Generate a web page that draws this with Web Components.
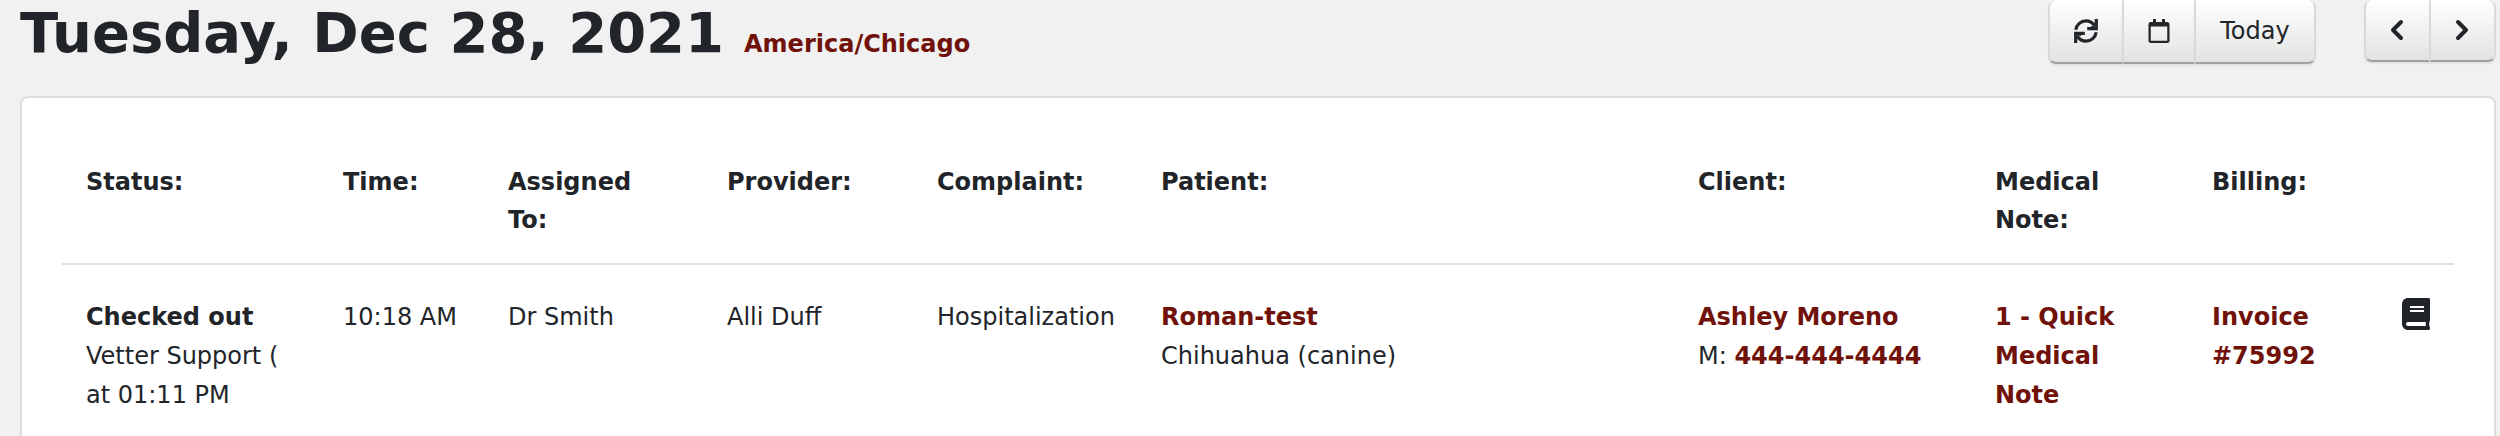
<!DOCTYPE html>
<html lang="en">
<head>
<meta charset="utf-8">
<title>Appointments</title>
<style>
html { background: #f1f1f1; }
body { margin: 0; font: 24px/39px Verdana, "DejaVu Sans", sans-serif; color: #212529; }
</style>
</head>
<body>
<day-page></day-page>
<script>
const define = (name, html) => customElements.define(name, class extends HTMLElement {
  constructor() {
    super();
    const t = document.createElement('template');
    t.innerHTML = html;
    this.attachShadow({ mode: 'open' }).append(t.content.cloneNode(true));
  }
});

define('button-group', `
<style>
:host { display: flex; }
::slotted(button) {
  display: flex; align-items: center; justify-content: center;
  box-sizing: border-box; height: var(--height, 64px); padding: 0 24px; margin: 0;
  font: inherit; color: inherit; cursor: pointer;
  border: 2px solid #d9d9d9; border-top-width: 0; border-right-width: 0; border-bottom-color: #a0a0a0;
  background: linear-gradient(#fff, #e2e2e2);
  box-shadow: 0 2px 2px #0001;
}
::slotted(button:first-of-type) { border-radius: 8px 0 0 8px; }
::slotted(button:last-of-type) { border-right-width: 2px; border-radius: 0 8px 8px 0; }
</style>
<slot></slot>`);

define('day-header', `
<style>
:host { display: flex; align-items: flex-start; gap: 48px; }
.title { flex: 1; display: flex; align-items: baseline; gap: 20px; }
h1 { margin: 0; font-size: 56px; line-height: 66px; }
a { color: #70120a; font-weight: bold; text-decoration: none; }
svg { display: block; }
.nav { --height: 62px; }
.pad { padding: 0 23px; }
.today { min-width: 122px; }
</style>
<div class="title"><h1>Tuesday, Dec 28, 2021</h1><a href="#timezone">America/Chicago</a></div>
<button-group>
  <button type="button" aria-label="Refresh"><svg width="24" height="24" viewBox="0 0 24 24" fill="none" stroke="currentColor" stroke-width="3.200"><g id="half"><path d="M1.800 10.800C2.600 5.500 6.800 1.900 12 1.900c3.600 0 6.500 1.700 8.600 4.800"/><path d="M22.300 0v9.700H13.200M22 9 17 8.500"/></g><g transform="rotate(180 12 12)"><path d="M1.800 10.800C2.600 5.500 6.800 1.900 12 1.900c3.600 0 6.500 1.700 8.600 4.800"/><path d="M22.300 0v9.700H13.200M22 9 17 8.500"/></g></svg></button>
  <button type="button" aria-label="Pick a date"><svg width="22" height="24" viewBox="0 0 448 512" fill="currentColor"><path d="M400 64h-48V12c0-6.600-5.400-12-12-12h-40c-6.600 0-12 5.400-12 12v52H160V12c0-6.600-5.400-12-12-12h-40c-6.600 0-12 5.400-12 12v52H48C21.500 64 0 85.500 0 112v352c0 26.500 21.500 48 48 48h352c26.500 0 48-21.500 48-48V112c0-26.500-21.500-48-48-48zm-6 400H54c-3.300 0-6-2.700-6-6V160h352v298c0 3.300-2.700 6-6 6z"/></svg></button>
  <button type="button" class="today">Today</button>
</button-group>
<button-group class="nav">
  <button type="button" class="pad" aria-label="Previous day"><svg width="17" height="24" viewBox="0 0 17 24" fill="none" stroke="currentColor" stroke-width="4" stroke-linecap="round" stroke-linejoin="round"><path d="M12 4 4 12l8 8"/></svg></button>
  <button type="button" class="pad" aria-label="Next day"><svg width="17" height="24" viewBox="0 0 17 24" fill="none" stroke="currentColor" stroke-width="4" stroke-linecap="round" stroke-linejoin="round"><path d="m4 4 8 8-8 8"/></svg></button>
</button-group>`);

define('page-card', `
<style>
:host { display: block; padding: 40px 40px 0; background: #fff; border: 2px solid #ddd; border-bottom: 0; border-radius: 8px 8px 0 0; }
</style>
<slot></slot>`);

define('appointment-table', `
<style>
:host { display: block; }
table { width: 100%; table-layout: fixed; border-collapse: collapse; }
th, td { padding: 24px; text-align: left; vertical-align: top; }
thead th { padding-top: 25px; line-height: 38px; border-bottom: 2px solid #dee2e6; }
tbody td { padding-top: 33px; padding-bottom: 0; }
td:nth-child(5) { white-space: nowrap; padding-right: 0; }
a { color: #70120a; font-weight: bold; text-decoration: none; }
.status { width: 257px; } .time { width: 165px; } .assigned { width: 219px; }
.provider { width: 210px; } .complaint { width: 224px; } .client { width: 297px; }
.note { width: 217px; } .billing { width: 190px; } .log { width: 76px; }
td:nth-child(2), td:nth-child(8) { padding-right: 0; }
button { display: block; margin: 0; padding: 0; border: 0; background: none; color: inherit; cursor: pointer; }
svg { display: block; }
</style>
<table>
<colgroup><col class="status"><col class="time"><col class="assigned"><col class="provider"><col class="complaint"><col><col class="client"><col class="note"><col class="billing"><col class="log"></colgroup>
<thead><tr><th>Status:</th><th>Time:</th><th>Assigned<br>To:</th><th>Provider:</th><th>Complaint:</th><th>Patient:</th><th>Client:</th><th>Medical<br>Note:</th><th>Billing:</th><th></th></tr></thead>
<tbody><tr>
<td><b>Checked out</b><br>Vetter Support (<br>at 01:11 PM</td>
<td>10:18 AM</td><td>Dr Smith</td><td>Alli Duff</td><td>Hospitalization</td>
<td><a href="#patient">Roman-test</a><br>Chihuahua (canine)</td>
<td><a href="#client">Ashley Moreno</a><br>M: <a href="tel:4444444444">444-444-4444</a></td>
<td><a href="#note">1 - Quick<br>Medical<br>Note</a></td>
<td><a href="#invoice">Invoice<br>#75992</a></td>
<td><button type="button" aria-label="Log"><svg width="28" height="32" viewBox="0 0 448 512" fill="currentColor"><path d="M448 360V24c0-13.300-10.700-24-24-24H96C43 0 0 43 0 96v320c0 53 43 96 96 96h328c13.300 0 24-10.700 24-24v-16c0-7.500-3.500-14.300-8.900-18.700-4.200-15.400-4.200-59.300 0-74.700 5.400-4.300 8.900-11.100 8.900-18.600zM128 134c0-3.300 2.700-6 6-6h212c3.300 0 6 2.700 6 6v20c0 3.300-2.700 6-6 6H134c-3.300 0-6-2.700-6-6v-20zm0 64c0-3.300 2.700-6 6-6h212c3.300 0 6 2.700 6 6v20c0 3.300-2.700 6-6 6H134c-3.300 0-6-2.700-6-6v-20zm253.400 250H96c-17.700 0-32-14.300-32-32 0-17.600 14.400-32 32-32h285.400c-1.900 17.100-1.900 46.900 0 64z"/></svg></button></td>
</tr></tbody>
</table>`);

define('day-page', `
<style>
:host { display: flex; flex-direction: column; gap: 30px; box-sizing: border-box; min-height: 100vh; padding: 0 4px 0 20px; }
page-card { flex: 1; }
</style>
<day-header></day-header>
<page-card><appointment-table></appointment-table></page-card>`);
</script>
</body>
</html>
